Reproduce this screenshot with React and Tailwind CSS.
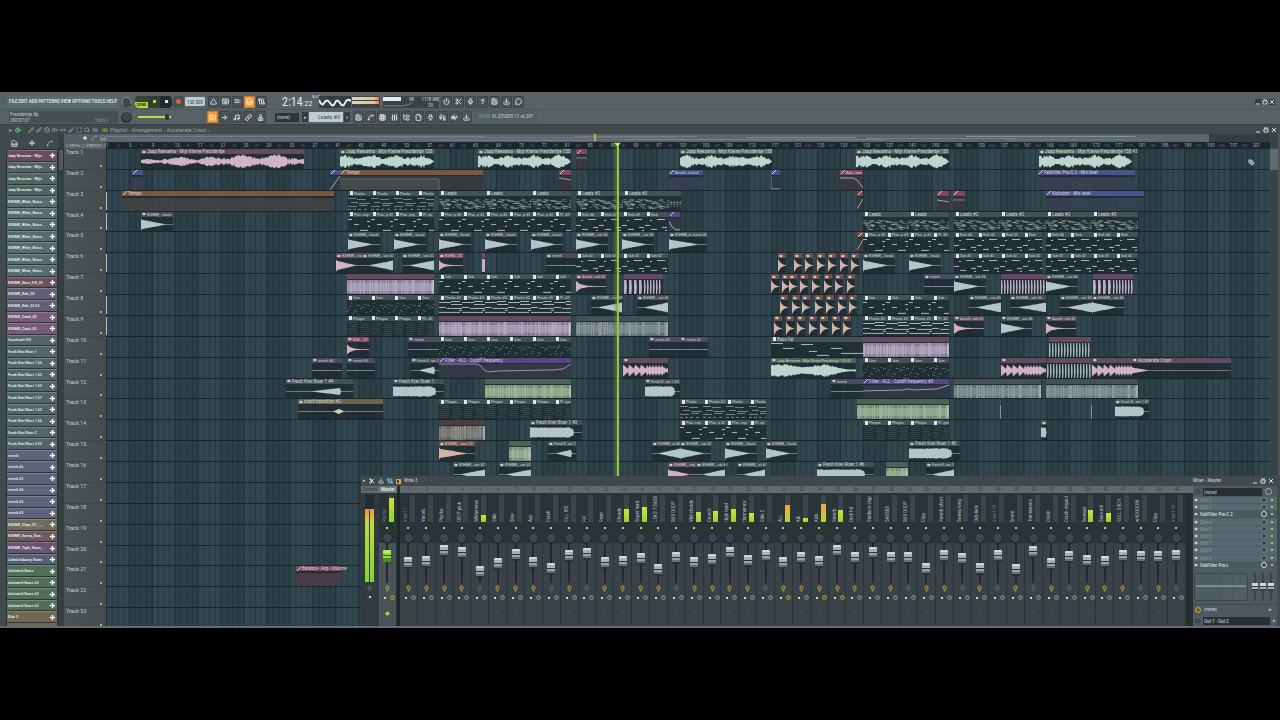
import React, { useState } from 'react';
import {
  ArrowRight, Ban, Brush, Cable, Download, File, FolderTree, Footprints, Grid3x3, Keyboard, Link,
  Magnet, Maximize, MessageCircle, Mic, MoveHorizontal, Music, Pencil, Piano, Plug, Plus, Power,
  Save, Scissors, Search, Slice, SlidersVertical, Spline, Stamp, Triangle, Volume2, VolumeX, Wind,
} from 'lucide-react';

// playlist canvas: x values of the clips run from ORIGIN to ORIGIN + SPAN
const ORIGIN = 106;
const SPAN = 1164;
const BARS = 203;
const TRACKS = 23;

const pct = (n) => `${(n / SPAN) * 100}%`;
const rnd = (n) => {
  const v = Math.sin(n * 12.9898 + 4.1) * 43758.5453;
  return v - Math.floor(v);
};

const HEADS = {
  gray: 'bg-[#465057]',
  pink: 'bg-[#634c61]',
  red: 'bg-[#84465f]',
  rust: 'bg-[#84483f]',
  green: 'bg-[#4b6455]',
  blue: 'bg-[#4b538c]',
  brown: 'bg-[#7b573f]',
  perc: 'bg-[#745147]',
  dark: 'bg-[#4a423f]',
  purple: 'bg-[#594583]',
  slate: 'bg-[#4b4c60]',
  tan: 'bg-[#68634a]',
};

const MINT = '#bcd5cd';
const ICE = '#b2c5ca';
const ROSE = '#d0b2c4';
const PEACH = '#d2b3a5';
const LILAC = '#bba9c6';

const JAAP = 'Jaap Reesema - Mijn Kleine Presidentje';

const clip = (t, x, end, kind, label, head = 'gray', color = ICE, pts) => ({
  t, x, w: end - x, kind, label, head, color, pts,
});

const seq = (t, start, end, kind, labels, step = 23) =>
  labels.map((label, i) =>
    clip(t, start + i * step, Math.min(start + (i + 1) * step, end), kind, label, 'gray', '#b4c2c4')
  );

const hits = (t, xs) => xs.map((x) => clip(t, x, x + 8, 'hit', '', 'perc', PEACH));

const rep = (s, n) => Array(n).fill(s);
const PLUC = 'Pluc..p #3';
const KICKS = ['Kick #4', 'Kick #2', 'Kick #3', 'Kick'];

const CLIPS = [
  clip(1, 141, 304, 'voxlow', JAAP, 'pink', ROSE),
  clip(1, 340, 434, 'vox', `${JAAP} 150`, 'green', MINT),
  clip(1, 478, 571, 'vox', `${JAAP} 150`, 'green', MINT),
  clip(1, 576, 587, 'auto', '', 'red', '#8d8d99', '0,4 11,4'),
  clip(1, 680, 772, 'vox', `${JAAP} 150`, 'green', MINT),
  clip(1, 856, 949, 'vox', `${JAAP} 150`, 'green', MINT),
  clip(1, 1039, 1132, 'vox', `${JAAP} 150 #3`, 'green', MINT),

  clip(2, 132, 143, 'auto', '', 'blue'),
  clip(2, 330, 340, 'auto', '', 'blue', '#b8c4c8', '0,15 10,1'),
  clip(2, 340, 483, 'auto', 'Tempo', 'brown', '#6c777a', '0,4 99,4 99,15'),
  clip(2, 559, 571, 'auto', '', 'red', '#a5a5ad', '0,3 12,5'),
  clip(2, 669, 703, 'auto', 'Reverb..ix level', 'blue'),
  clip(2, 771, 780, 'auto', '', 'blue', '#8f99a8', '0,1 0,14 9,14'),
  clip(2, 840, 863, 'auto', 'Bala..ume', 'red', '#b0b8bc', '0,3 13,3 17,5 20,9 23,13'),
  clip(2, 1038, 1135, 'auto', 'FabFilter Pro-Q 2 - Mix level', 'blue'),

  clip(3, 122, 334, 'auto', 'Tempo', 'brown'),
  ...seq(3, 348, 434, 'plucks', rep('Plucks', 4)),
  ...seq(3, 439, 571, 'leads', rep('Leads', 3), 46),
  ...seq(3, 576, 669, 'leads', rep('Leads #2', 2), 47),
  ...seq(3, 669, 681, 'leads', rep('', 4), 3),
  clip(3, 857, 863, 'auto', '', 'rust', '#b8b0b0', '0,13 6,3'),
  clip(3, 937, 949, 'auto', '', 'red', '#b8b0b0', '0,4 12,6'),
  clip(3, 953, 965, 'auto', '', 'red', '#8d8d99', '0,4 12,4'),
  clip(3, 1046, 1144, 'auto', 'Kickstart - Mix level', 'blue'),

  clip(4, 141, 173, 'decay', 'KSHMR_..haust'),
  ...seq(4, 348, 434, 'sub', ['Pluc..eep', 'Pluc..p #2', 'Pluc..eep', 'Pl..ep']),
  ...seq(4, 439, 571, 'sub', [...rep(PLUC, 5), 'Pl..#3']),
  ...seq(4, 576, 669, 'kick', KICKS),
  clip(4, 669, 680, 'auto', '', 'purple', '#b0b8bc', '0,4 3,10 7,13 11,13'),
  ...seq(4, 863, 949, 'leads', rep('Leads', 2), 46),
  ...seq(4, 954, 1138, 'leads', ['Leads #2', 'Leads #2', 'Leads #2', 'Leads #3'], 46),

  ...[348, 394, 439, 485, 531].map((x) => clip(5, x, x + 32, 'decay', 'KSHMR_..haust')),
  clip(5, 576, 608, 'decay', 'KSHMR_..ust #6'),
  clip(5, 622, 654, 'decay', 'KSHMR_..ust #6'),
  clip(5, 669, 707, 'decay', 'KSHMR_w..haust #6'),
  clip(5, 857, 863, 'auto', '', 'rust', '#b8b0b0', '0,13 6,3'),
  ...seq(5, 863, 949, 'sub', [PLUC, PLUC, PLUC, 'Pl..#3']),
  ...seq(5, 954, 1042, 'kick', KICKS),
  ...seq(5, 1046, 1138, 'kick', ['Kick #4', 'Kick', 'Kick #4', 'Kick']),

  clip(6, 336, 362, 'decay', 'KSHMR_..rog', 'pink', ROSE),
  clip(6, 362, 393, 'rise', 'KSHMR_..ust #2'),
  clip(6, 402, 434, 'rise', 'KSHMR_..ust #2'),
  clip(6, 439, 463, 'crash', 'KSHM.._02', 'red', ROSE),
  clip(6, 482, 485, 'solid', '', 'red', ROSE),
  clip(6, 546, 576, 'line', 'reverb', 'slate'),
  ...seq(6, 576, 669, 'kick', rep('Sub #2', 4)),
  ...hits(6, [778, 794, 805, 817, 828, 840, 851]),
  clip(6, 863, 895, 'decay', 'KSHMR_..haust'),
  clip(6, 909, 941, 'decay', 'KSHMR_..haust'),
  ...seq(6, 954, 1042, 'kick', rep('Sub #2', 4)),
  ...seq(6, 1046, 1138, 'kick', rep('Sub #2', 4)),

  clip(7, 347, 434, 'block', '', 'pink', LILAC),
  ...seq(7, 439, 571, 'sub', rep('Sub', 6)),
  clip(7, 576, 606, 'crash', 'Accele..ash #2', 'pink', ROSE),
  clip(7, 624, 663, 'stutter', '', 'pink', '#cbbcd2'),
  ...hits(7, [771, 782, 789, 800, 812, 824, 835, 847]),
  clip(7, 924, 954, 'line', 'reverb', 'slate'),
  clip(7, 954, 986, 'decay', 'KSHMR_..ust #6'),
  clip(7, 1001, 1046, 'stutter', '', 'pink', '#cbbcd2'),
  clip(7, 1046, 1078, 'decay', 'KSHMR_..ust #6'),
  clip(7, 1093, 1133, 'stutter', '', 'pink', '#cbbcd2'),

  ...seq(8, 347, 434, 'sine', rep('Sine', 4)),
  ...seq(8, 439, 571, 'chords', [...rep('Plucks #3', 5), 'Pl..#3']),
  clip(8, 591, 622, 'rise', 'KSHMR_..ust #5'),
  clip(8, 637, 668, 'rise', 'KSHMR_..ust #5'),
  ...hits(8, [780, 792, 802, 815, 826, 838, 849]),
  ...seq(8, 863, 949, 'sub', rep('Sub', 4)),
  clip(8, 969, 1001, 'rise', 'KSHMR_..ust #5'),
  clip(8, 1010, 1046, 'rise', 'KSHMR_..ust #5'),
  clip(8, 1060, 1092, 'rise', 'KSHMR_..ust #5'),
  clip(8, 1092, 1124, 'decay', 'KSHMR_..ust #6'),

  ...seq(9, 347, 434, 'plings', ['Plingss', 'Plingss', 'Plingss', 'Pli..#2']),
  clip(9, 439, 571, 'block', '', 'pink', LILAC),
  clip(9, 576, 668, 'block', '', 'gray', '#87949a'),
  ...hits(9, [774, 786, 797, 809, 820, 832, 843]),
  ...seq(9, 863, 949, 'chords', ['Plucks #3', 'Plucks #3', 'Plucks #3', 'Pl..#3']),
  clip(9, 954, 984, 'crash', 'Accele..ash #2', 'pink', ROSE),
  clip(9, 1001, 1032, 'decay', 'KSHMR_..ust #6'),
  clip(9, 1046, 1076, 'crash', 'Accele..ash #2', 'pink', ROSE),

  clip(10, 347, 369, 'crash', 'KSH.._03', 'red', ROSE),
  clip(10, 408, 439, 'line', 'reverb', 'slate'),
  ...seq(10, 439, 571, 'sine', rep('Sine', 6)),
  clip(10, 649, 680, 'line', 'reverb #3', 'slate'),
  clip(10, 680, 708, 'line', 'reverb #2', 'slate'),
  clip(10, 771, 863, 'bass', 'Bass fat', 'gray', '#b4c2c4'),
  clip(10, 863, 949, 'block', '', 'pink', LILAC),
  clip(10, 1049, 1091, 'stutter', '', 'pink', '#aebbbf'),

  clip(11, 312, 342, 'line', 'reverb #4', 'slate'),
  clip(11, 347, 375, 'line', 'reverb #5', 'slate'),
  clip(11, 411, 439, 'blip', 'Fresh K..ser 2'),
  clip(11, 439, 571, 'auto', 'Filter - ALL - Cutoff frequency', 'purple', '#a79cc0', '0,1 38,1 42,3 45,7 49,9 60,8 115,7 124,6 129,3 132,1'),
  clip(11, 623, 668, 'burst', '', 'pink', ROSE),
  clip(11, 771, 856, 'voxfall', `${JAAP} 150 #2`, 'green', MINT),
  ...seq(11, 863, 949, 'sine', rep('Sine', 4)),
  clip(11, 1001, 1046, 'burst', '', 'pink', ROSE),
  clip(11, 1047, 1091, 'stutter', '', 'pink', '#aebbbf'),
  clip(11, 1092, 1137, 'burst', '', 'pink', ROSE),
  clip(11, 1132, 1231, 'tail', 'Accelerate Crash', 'pink', ROSE),

  clip(12, 286, 353, 'riser', 'Fresh Kiwi Riser 1 #4'),
  clip(12, 393, 444, 'blob', 'Fresh Kiwi Riser 1'),
  clip(12, 485, 571, 'block', '', 'green', '#9fbb96'),
  clip(12, 645, 680, 'blob', 'Fresh Ki..ser 1 #3'),
  clip(12, 831, 863, 'line', 'reverb', 'slate'),
  clip(12, 863, 949, 'auto', 'Filter - ALL - Cutoff frequency #3', 'purple', '#a9a5bd', '0,7 40,6 46,5 50,6 74,5 80,3 86,1'),
  clip(12, 954, 1041, 'block', '', 'gray', '#87949a'),
  clip(12, 1046, 1138, 'block', '', 'gray', '#87949a'),

  clip(13, 298, 383, 'bump', 'crash transition #2', 'tan', '#cfcdb5'),
  ...seq(13, 439, 571, 'plings', [...rep('Plingss', 5), 'Pl..gss']),
  ...seq(13, 680, 766, 'plucks', ['Plucks', 'Plucks #2', 'Plucks', 'Plucks']),
  clip(13, 857, 949, 'block', '', 'green', '#9fbb96'),
  clip(13, 1000, 1001, 'sliver', ''),
  clip(13, 1091, 1092, 'sliver', ''),
  clip(13, 1115, 1149, 'blob', 'Fresh Ki..ser 1 #7'),

  clip(14, 439, 485, 'block', '', 'dark', '#85847e'),
  clip(14, 530, 582, 'blob', 'Fresh Kiwi Riser 1 #2'),
  ...seq(14, 680, 766, 'sub', ['Pluc..eep', 'Pluc..p #2', 'Pluc..eep', 'Pl..ep']),
  ...seq(14, 863, 949, 'plings', ['Plingss', 'Plingss', 'Plingss', 'Pl..gss']),
  clip(14, 1041, 1047, 'blob', ''),

  clip(15, 439, 475, 'decay', 'KSHMR_..own_02', 'perc', PEACH),
  clip(15, 509, 531, 'block', '', 'green', '#9fbb96'),
  clip(15, 548, 576, 'blip', 'Fresh K..ser 2'),
  clip(15, 652, 680, 'rise', 'KSHMR..st #6'),
  clip(15, 680, 711, 'decay', 'KSHMR_..ust #2'),
  clip(15, 725, 757, 'decay', 'KSHMR_..haust'),
  clip(15, 766, 797, 'decay', 'KSHMR_..haust'),
  clip(15, 909, 960, 'blob', 'Fresh Kiwi Riser 1 #2'),

  clip(16, 453, 485, 'rise', 'KSHMR_..ust #2'),
  clip(16, 499, 531, 'rise', 'KSHMR_..ust #2'),
  clip(16, 668, 696, 'decay', 'KSHMR_..rog', 'pink', ROSE),
  clip(16, 696, 725, 'rise', 'KSHMR_..ust #2'),
  clip(16, 737, 765, 'rise', 'KSHMR_..st #2'),
  clip(16, 817, 874, 'blob', 'Fresh Kiwi Riser 1 #6'),
  clip(16, 886, 908, 'block', '', 'green', '#9fbb96'),
  clip(16, 926, 954, 'rise', 'Fresh K..ser 2'),

  clip(21, 296, 341, 'auto', 'Balance - Arp - Volume', 'red'),
];

const ENVELOPES = {
  vox: (p, r, x) => (p > 0.93 ? (1 - p) * 9 : 0.66 + 0.2 * Math.sin(x / 4)) * (0.55 + 0.7 * r),
  voxlow: (p, r, x) => {
    const base = p < 0.13 ? 0.25 : p < 0.5 ? 0.55 : 0.85;
    return (p > 0.96 ? 0.3 : base) * (0.5 + 0.35 * Math.sin(x / 5) + 0.5 * r);
  },
  voxfall: (p, r, x) => (p < 0.2 ? 0.95 : 0.75 - 0.6 * Math.max(0, p - 0.6) * 2 + 0.25 * Math.sin(x / 7)) * (0.65 + 0.35 * r),
  decay: (p, r) => (p < 0.02 ? 0.95 : Math.max(0, 0.75 - p) * (0.85 + 0.15 * r)),
  rise: (p, r) => Math.max(0, p - 0.25) * (0.85 + 0.15 * r),
  crash: (p, r) => Math.max(0, 0.9 * Math.exp(-p * 6)) * (0.8 + 0.2 * r),
  hit: (p) => 1.1 * Math.exp(-p * 2.8) - 0.06,
  line: () => 0,
  bump: (p) => Math.max(0, 0.35 - Math.abs(p - 0.48) * 6),
  blip: (p) => (p > 0.85 ? 0 : Math.max(0, p - 0.3)),
  riser: (p) => (p > 0.82 ? 0 : Math.max(0, p - 0.4) * 1.2),
  blob: (p, r) => (p > 0.84 ? 0 : p > 0.78 ? 0.5 : 0.62 + 0.15 * r),
  tail: (p) => Math.max(0, 0.4 - p * 2.5),
  burst: (p, r, x) => (x < 24 ? 0.95 - (x % 6) / 7 : 0.5 + (x % 3 === 0 ? 0.4 : 0)) * (p > 0.93 ? 0.4 : 0.9),
};

const NOTES = {
  sub: [[0, 2, 4], [6, 7, 5], [12, 13, 8], [19, 4, 3], [20, 9, 2]],
  kick: [[0, 8, 5], [5, 3, 2], [6, 12, 6], [12, 2, 8], [17, 10, 5], [20, 13, 2]],
  chords: [[0, 2, 12], [12, 4, 11], [0, 7, 7], [8, 8, 15], [0, 12, 21], [20, 10, 3], [12, 1, 9]],
  plucks: [[0, 2, 8], [9, 3, 9], [3, 6, 7], [11, 7, 11], [0, 10, 9], [11, 9, 8], [0, 13, 3], [5, 13, 3], [10, 13, 3], [16, 13, 3]],
  bass: [[0, 1, 12], [12, 6, 11], [30, 2, 12], [38, 9, 8], [46, 13, 12], [60, 6, 11], [70, 11, 23]],
};

function Waveform({ kind, w, color }) {
  const env = ENVELOPES[kind];
  const top = [];
  const bottom = [];
  const step = w > 12 ? 1 : 0.5;
  for (let x = 0; x <= w; x += step) {
    const a = Math.min(1, env(x / w, rnd(x * 1.7 + w), x)) * 6.6 + 0.3;
    top.push(`${x},${(7.5 - a).toFixed(2)}`);
    bottom.unshift(`${x},${(7.5 + a).toFixed(2)}`);
  }
  return <polygon points={[...top, ...bottom].join(' ')} fill={color} />;
}

function Block({ w, color }) {
  const cols = Array.from({ length: Math.round(w) }, (_, x) => x);
  return (
    <>
      <rect x="0" y="1" width={w} height="14" fill={color} opacity="0.7" />
      {cols.map((x) => (
        <rect key={x} x={x} y={rnd(x) > 0.5 ? 1 : 2} width="1" height="13" fill={rnd(x + w) > 0.4 ? '#dfe6e6' : '#4c565c'} opacity={rnd(x * 3) * 0.4} />
      ))}
      <rect x="0" y="4" width={w} height="8" fill={color} opacity="0.6" />
      <rect x={w - 2} y="1" width="2" height="14" fill="#dfe6e6" opacity="0.4" />
    </>
  );
}

function Notes({ kind, w, color }) {
  if (kind === 'sine') {
    return Array.from({ length: 16 }, (_, i) => (
      <rect key={i} x={(i * 1.45) % w} y={2 + Math.floor(rnd(i + 3) * 12)} width="1" height="1" fill={color} opacity="0.6" />
    ));
  }
  if (kind === 'plings') {
    return Array.from({ length: 14 }, (_, i) => (
      <rect key={i} x={(i % 2) * w * 0.5 + rnd(i) * 3} y={1 + i} width={w * 0.4} height="0.6" fill={color} opacity="0.28" />
    ));
  }
  if (kind === 'leads') {
    return Array.from({ length: Math.round(w) * 2 }, (_, i) => (
      <rect key={i} x={rnd(i * 2.3) * w} y={3 + Math.floor(rnd(i + 9) * 10)} width={Math.min(w, 2 + rnd(i) * 3)} height="0.7" fill={color} opacity="0.55" />
    ));
  }
  return NOTES[kind]
    .filter(([x]) => x < w)
    .map(([x, y, len]) => (
      <rect key={`${x}-${y}`} x={x} y={y} width={Math.min(len, w - x)} height="1" fill={color} opacity={kind === 'plucks' ? 0.6 : 0.95} />
    ));
}

function Stutter({ w, color }) {
  const bars = [];
  for (let x = 0, i = 0; x < w - 1; i += 1) {
    const size = x < 18 && w < 42 ? 4 : 2;
    bars.push(<path key={x} d={`M${x} 1h${size * 0.6}q1 6.500 0 14h-${size * 0.6}z`} fill={color} opacity="0.9" />);
    x += size + 1;
  }
  return bars;
}

function Automation({ w, color, pts, head }) {
  const tint = head === 'red' ? '#54404f' : head === 'purple' ? '#46445a' : head === 'blue' ? '#3d4658' : '#4a4a48';
  return (
    <>
      <rect x="0" y={pts ? 1 : 2} width={w} height="14" fill={tint} opacity={pts ? 0.45 : 0.75} />
      {head === 'brown' && pts && <rect x="0" y="4" width="99" height="11" fill="#4c504e" opacity="0.7" />}
      {pts && <polyline points={pts} fill="none" stroke={color} strokeWidth="0.9" />}
    </>
  );
}

function ClipBody(props) {
  const { kind, w, color } = props;
  if (kind === 'auto') return <Automation {...props} />;
  if (kind === 'block') return <Block {...props} />;
  if (kind === 'stutter') return <Stutter {...props} />;
  if (kind === 'solid') return <rect x="0" y="1" width={w} height="13" fill={color} />;
  if (kind === 'sliver') return <rect x="0" y="1" width={w} height="14" fill={color} opacity="0.7" />;
  if (ENVELOPES[kind]) return <Waveform {...props} />;
  return <Notes {...props} />;
}

const MIDI = ['sub', 'kick', 'chords', 'plucks', 'bass', 'sine', 'plings', 'leads'];

function Clip({ c }) {
  const { x, w, kind, label, head } = c;
  return (
    <div className="absolute inset-y-0 flex flex-col" style={{ left: pct(x - ORIGIN), width: pct(w) }}>
      <div className={`flex h-[5px] shrink-0 items-center gap-px pl-px leading-[5px] whitespace-nowrap text-[#cdd6d8] ${w < 40 || kind === 'voxfall' ? 'text-[4px]' : 'text-[5px]'} ${HEADS[head]}`}>
        {w > 5 && kind !== 'block' && kind !== 'stutter' && (
          <svg viewBox="0 0 4 4" className="h-[4px] w-[4px] shrink-0">
            {kind === 'auto' ? (
              <path d="M0 4L4 0M3 0h1v1" stroke="#e2e8ea" strokeWidth="0.9" fill="none" />
            ) : MIDI.includes(kind) ? (
              <path d="M1 0h3v4H1z" fill="#e2e8ea" />
            ) : (
              <path d="M0 1.500h1.500V0.500L4 2 1.500 3.500V2.500H0z" fill="#e2e8ea" />
            )}
          </svg>
        )}
        {w > 12 && label && <span>{label}</span>}
      </div>
      <svg viewBox={`0 0 ${w} 15`} preserveAspectRatio="none" className="min-h-0 w-full flex-1 bg-[#1d282e]/70">
        <ClipBody {...c} />
      </svg>
    </div>
  );
}

const PICKER = [
  ['Jaap Reesema - Mijn..', 'bg-[#6c4b5c]'],
  ...rep(['Jaap Reesema - Mijn..', 'bg-[#506460]'], 3),
  ...rep(['KSHMR_White_Noise..', 'bg-[#586a72]'], 7),
  ['KSHMR_Short_Fill_20', 'bg-[#6d505b]'],
  ['KSHMR_Ride_03', 'bg-[#625f77]'],
  ['KSHMR_Ride_03 #2', 'bg-[#625f77]'],
  ['KSHMR_Crash_02', 'bg-[#765a76]'],
  ['KSHMR_Crash_03', 'bg-[#765a76]'],
  ['Accelerate Fill', 'bg-[#54646b]'],
  ...['1', '1 #4', '1 #2', '1 #3', '1 #7', '1 #5', '1 #6', '2', '2 #2'].map((n) => [`Fresh Kiwi Riser ${n}`, 'bg-[#54646b]']),
  ...['', ' #6', ' #3', ' #4', ' #2', ' #5'].map((n) => [`reverb${n}`, 'bg-[#5c637a]']),
  ['KSHMR_Claps_07_-_..', 'bg-[#6f6b5c]'],
  ['KSHMR_Sweep_Dow..', 'bg-[#70595a]'],
  ['KSHMR_Tight_Snare_..', 'bg-[#6a5570]'],
  ['Lethal Industry Snare', 'bg-[#566078]'],
  ...['', ' #4', ' #3', ' #2'].map((n) => [`Activated Snare${n}`, 'bg-[#526e59]']),
  ['Kick 5', 'bg-[#6f6854]'],
];

// [name, fader centre from the top of its slot, meter height, lit]
const INSERTS = [
  ['Insert 1', 14, 0, 1], ['Vocals', 13, 0, 1], ['Plucks', 2, 0, 1], ['DEEP pluk', 4, 0, 1], ['Whitenoise', 23, 7, 0],
  ['Ride', 15, 0, 1], ['Sine', 6, 0, 1], ['Arp', 14, 0, 1], ['Crash', 20, 0, 0], ['FILL BIG', 7, 0, 1], ['Fill', 5, 0, 0],
  ['Riser', 14, 0, 1], ['Chords', 13, 13, 1], ['Super lead', 10, 15, 1], ['LEAD 7 BASS', 21, 0, 1], ['SUB DROP', 9, 0, 0],
  ['Mid chords', 14, 10, 1], ['Crunch', 11, 11, 1], ['High lead', 4, 13, 1], ['Harmonics', 12, 9, 1], ['Ride 2', 7, 0, 0],
  ['ALL', 14, 17, 1], ['Kik', 9, 4, 1], ['Kick', 13, 18, 1], ['Reverb', 2, 12, 1], ['Orch hit', 9, 0, 1],
  ['Stadium clap', 4, 0, 1], ['BASSSS', 9, 0, 1], ['SUB DROP', 9, 0, 0], ['Clap', 20, 0, 1], ['Reverb short', 7, 0, 1],
  ['Sweep long', 10, 0, 0], ['Dub kick', 20, 0, 1], ['Insert 34', 7, 0, 0], ['Snare', 21, 0, 1], ['Transisions', 3, 0, 0],
  ['Crash', 15, 0, 1], ['Crash impact', 8, 0, 0], ['Sweeps', 12, 12, 1], ['Bass roll', 13, 9, 1], ['ROLL DRCH', 7, 0, 1],
  ['wHOOOOM', 8, 0, 0], ['Clap', 8, 0, 1], ['Insert 44', 7, 0, 0],
];

const SLOTS = ['Slot 1', 'Slot 2', 'FabFilter Pro-C 2', 'Slot 4', 'Slot 5', 'Slot 6', 'Slot 7', 'Slot 8', 'Slot 9', 'FabFilter Pro-L'];

const FADER =
  'h-[40px] w-[8px] shrink-0 appearance-none [writing-mode:vertical-lr] [direction:rtl] bg-[linear-gradient(90deg,transparent_3px,#20292e_3px,#20292e_5px,transparent_5px)] [&::-webkit-slider-thumb]:appearance-none [&::-webkit-slider-thumb]:h-[12px] [&::-webkit-slider-thumb]:w-[8px] [&::-webkit-slider-thumb]:rounded-[1px]';
const GRAY_THUMB =
  '[&::-webkit-slider-thumb]:bg-[linear-gradient(#d3d8db_0_2px,#a9b0b5_2px_5px,#2b3237_5px_6px,#9ba2a7_6px_8px,#666e74_8px_10px,#2b3237_10px)]';
const GREEN_THUMB =
  '[&::-webkit-slider-thumb]:bg-[linear-gradient(#b8f05a_0_3px,#8fdc35_3px_5px,#2f5a18_5px_6px,#8fdc35_6px_8px,#4f8a22_8px)]';

function Tool({ icon: Icon, label, active, children }) {
  return (
    <button
      aria-label={label}
      className={`flex h-[12px] w-[11px] items-center justify-center rounded-[1px] border text-[8px] font-bold leading-none ${
        active ? 'border-[#c97a24] bg-[#f39a3a] text-[#ffe6b8]' : 'border-[#3d4548] bg-[#4a5255] text-[#dfe5e6]'
      }`}
    >
      {Icon ? <Icon className="h-[7px] w-[7px]" strokeWidth={3} /> : children}
    </button>
  );
}

function Knob({ big }) {
  return (
    <svg viewBox="0 0 12 12" className={big ? 'h-[12px] w-[11px] shrink-0' : 'h-[11px] w-[11px] shrink-0'}>
      <circle cx="6" cy="6" r="5.800" fill={big ? '#3c4447' : '#222b30'} />
      <circle cx="6" cy="5.500" r="4.600" fill="#3c474e" />
      {big && <path d="M2.500 9.500A5 5 0 1 1 10.500 8" fill="none" stroke="#a9b2b4" strokeWidth="0.8" />}
    </svg>
  );
}

function WindowButtons({ boxed }) {
  return (
    <div className={`flex items-center ${boxed ? 'gap-px' : 'gap-[2px]'}`}>
      {['M1 5h4', 'M1 2h4v3H1zM1 1h4', 'M1 1l4 4M5 1L1 5'].map((d, i) => (
        <button key={d} aria-label={['Minimize', 'Maximize', 'Close'][i]} className={`h-[6px] w-[6px] rounded-[1px] ${boxed ? 'bg-[#333b3e]' : ''}`}>
          <svg viewBox="0 0 6 6" className="h-full w-full">
            <path d={d} stroke="#d5dcdd" strokeWidth="1" fill="none" />
          </svg>
        </button>
      ))}
    </div>
  );
}

function Toolbar() {
  const [tempo, setTempo] = useState('150.000');
  return (
    <header className="border-b border-[#363e40] bg-[#586265] pt-[2px]">
      <div className="flex h-4 items-center border-b border-[#4d575a]">
        <nav className="ml-[7px] flex h-[12px] w-[112px] items-center justify-between bg-[#586b69] px-[2px] text-[5px] font-bold text-[#d6dfdf]">
          {['FILE', 'EDIT', 'ADD', 'PATTERNS', 'VIEW', 'OPTIONS', 'TOOLS', 'HELP'].map((m) => (
            <button key={m}>{m}</button>
          ))}
        </nav>
        <div className="ml-[2px]"><Knob big /></div>
        <div className="ml-[3px] flex h-[12px] w-[37px] items-center overflow-hidden rounded-[4px] bg-[#22292b]">
          <button className="flex h-full w-[13px] flex-col justify-end bg-[#39432f]">
            <span className="w-full bg-[#a4dc3c] text-center text-[4px] leading-[6px] font-bold text-[#2b3a10]">SONG</span>
          </button>
          <button aria-label="Play" className="flex h-full flex-1 items-center justify-center bg-[#343d30]">
            <span className="h-[3px] w-[3px] bg-[#b9d94a]" />
          </button>
          <button aria-label="Stop" className="flex h-full flex-1 items-center justify-center">
            <span className="h-[3px] w-[3px] bg-[#e0e5e5]" />
          </button>
        </div>
        <button aria-label="Record" className="ml-px flex h-[12px] w-[11px] items-center justify-center rounded-[3px] bg-[#474f51]">
          <span className="h-[5px] w-[5px] rounded-full bg-[#d8604a]" />
        </button>
        <input
          aria-label="Tempo"
          value={tempo}
          onChange={(e) => setTempo(e.target.value)}
          className="ml-px h-[9px] w-[20px] rounded-[1px] bg-[#bccdd2] text-center text-[5px] leading-none text-[#3c4a50]"
        />
        <div className="ml-[3px] flex gap-px">
          <Tool icon={Triangle} label="Metronome" />
          <Tool icon={Keyboard} label="Wait for input" />
          <Tool label="Count in"><span className="text-[5px]">32:</span></Tool>
          <Tool icon={Piano} label="Overdub" active />
          <Tool icon={Cable} label="Loop record" />
        </div>
        <div className="ml-[15px] flex w-[37px] items-baseline text-[12px] leading-none text-[#e3e9ea]">
          2:14<span className="text-[8px]">:22</span>
          <span className="self-start text-[3px] leading-none">M:S:CS</span>
        </div>
        <svg viewBox="0 0 32 12" className="h-[12px] w-[32px] bg-[#343d40]">
          <path d="M0 4q3 7 5 3q3-5 6 0t5 0 5 0 5 0 6-2" fill="none" stroke="#eef2f2" strokeWidth="2" />
        </svg>
        <div className="ml-px flex h-[12px] w-[28px] flex-col gap-px bg-[#3b4346] pt-px">
          <div className="h-[3px] w-[27px] bg-linear-to-r from-[#d9d6c4] via-[#e0c49f] via-80% to-[#e8793f]" />
          <div className="h-[3px] w-[27px] bg-linear-to-r from-[#d9d6c4] via-[#e0c49f] via-80% to-[#e8793f]" />
        </div>
        <div className="ml-[3px] grid h-[12px] w-[56px] grid-cols-[34px_22px] bg-[#3a4245] text-[5px] leading-[6px] text-[#cfd7d8]">
          <div className="flex flex-col">
            <div className="flex h-[6px] items-center justify-between pr-[3px]"><span className="h-[4px] w-[18px] bg-[#e8eded]" />98</div>
            <svg viewBox="0 0 34 6" className="h-[6px] w-[32px]">
              <path d="M1 4h16q10 0 14-4" fill="none" stroke="#88a39c" strokeWidth="0.8" />
            </svg>
          </div>
          <div className="text-right"><div>1118 MB</div><div className="pr-[6px]">29</div></div>
        </div>
        <div className="ml-[2px] flex gap-px">
          <Tool icon={Power} label="Power" />
          <Tool icon={Scissors} label="Cut" />
          <Tool icon={Mic} label="Record audio" />
          <Tool label="Help">?</Tool>
          <Tool icon={Save} label="Save" />
          <Tool icon={Download} label="Render" />
          <Tool icon={MessageCircle} label="Messages" />
        </div>
        <div className="ml-auto mr-[5px]"><WindowButtons boxed /></div>
      </div>
      <div className="flex h-[14px] items-center">
        <div className="ml-[9px] h-[12px] w-[109px] bg-[#465053] px-px text-[5px] leading-[6px] text-[#c3cccd]">
          <div>Presidentje.flp</div>
          <div className="flex justify-between"><span>200:07:07</span><span className="pr-2 text-[#8b9597]">Track 1</span></div>
        </div>
        <div className="ml-[3px]"><Knob /></div>
        <input
          type="range"
          aria-label="Main volume"
          defaultValue="92"
          className="ml-[6px] h-[8px] w-[33px] appearance-none bg-[linear-gradient(transparent_3px,#b6dc4a_3px,#b6dc4a_5px,transparent_5px)] [&::-webkit-slider-thumb]:h-[6px] [&::-webkit-slider-thumb]:w-[4px] [&::-webkit-slider-thumb]:appearance-none [&::-webkit-slider-thumb]:rounded-full [&::-webkit-slider-thumb]:bg-[#2a3235]"
        />
        <div className="ml-[36px] flex gap-px">
          <Tool icon={Keyboard} label="Typing keyboard" active />
          <Tool icon={ArrowRight} label="Step" />
          <Tool icon={Music} label="Slide" />
          <Tool icon={Link} label="Multilink" />
          <Tool icon={Stamp} label="Stamp" />
        </div>
        <select aria-label="Snap" className="ml-[9px] h-[9px] w-[24px] appearance-none bg-[#2d3538] pl-[2px] text-[5px] leading-[9px] text-[#c6cfd0]">
          <option>(none)</option>
        </select>
        <button aria-label="Previous pattern" className="ml-[3px] h-[10px] w-[6px] bg-[#343c3f] text-[5px] leading-none text-[#cdd5d6]">▸</button>
        <select aria-label="Pattern" className="ml-px h-[10px] w-[34px] appearance-none bg-[#bccdd2] pl-[9px] text-[6px] leading-[10px] text-[#3a484e]">
          <option>Leads #3</option>
        </select>
        <button aria-label="Next pattern" className="ml-px h-[10px] w-[6px] bg-[#343c3f] text-[5px] leading-none text-[#cdd5d6]">+</button>
        <div className="ml-[3px] flex gap-px">
          <Tool icon={Save} label="Playlist" />
          <Tool icon={Spline} label="Piano roll" />
          <Tool icon={Grid3x3} label="Channel rack" />
          <Tool icon={SlidersVertical} label="Mixer" />
          <Tool icon={FolderTree} label="Browser" />
          <Tool icon={File} label="Project" />
          <Tool icon={Plug} label="Plugins" />
          <Tool icon={Footprints} label="Tempo tapper" />
          <Tool icon={Wind} label="Touch" />
          <Tool icon={Download} label="Updates" />
        </div>
        <div className="ml-px flex h-[12px] w-[64px] items-center gap-[2px] bg-[#526160] pl-[6px] text-[5px] text-[#c9d6d3]">
          <span className="text-[#7f9a90]">05-05</span>FL STUDIO 11 vs 20?
        </div>
      </div>
    </header>
  );
}

function PlaylistHeader() {
  return (
    <div className="flex h-[9px] items-center bg-[#40494b] pl-[9px] text-[6px] leading-[9px] text-[#98a3a5]">
      <span className="w-[6px]">▸</span>
      <Magnet className="h-[6px] w-[6px] rotate-180 text-[#4fc98a]" strokeWidth={4} />
      <div className="ml-[7px] flex gap-[2px]">
        <Pencil className="h-[6px] w-[6px] text-[#d59a3c]" strokeWidth={3} />
        {[Brush, Ban, VolumeX, MoveHorizontal, Slice, Maximize, Search, Volume2].map((Icon, i) => (
          <Icon key={i} className="h-[6px] w-[6px]" strokeWidth={3} />
        ))}
      </div>
      <Volume2 className="ml-[4px] h-[6px] w-[6px] text-[#7fc241]" strokeWidth={3} />
      <span className="ml-[2px]">Playlist - Arrangement › Accelerate Crash ›</span>
      <div className="ml-auto mr-[3px]"><WindowButtons /></div>
    </div>
  );
}

function Picker() {
  return (
    <aside className="flex w-[52px] shrink-0 flex-col bg-[#2c3437]">
      <div className="flex h-[15px] items-center justify-around bg-[#40494b] pt-[3px] text-[#c3cccd]">
        <Piano className="h-[7px] w-[7px]" strokeWidth={3} />
        <Plus className="h-[8px] w-[8px]" strokeWidth={4} />
        <Spline className="h-[7px] w-[7px]" strokeWidth={2} />
      </div>
      <ul className="grid h-[473px] auto-rows-fr px-px">
        {PICKER.map(([name, color], i) => (
          <li key={i} className={`mt-px flex items-center justify-between border-t border-white/20 px-px text-[4px] font-bold whitespace-nowrap text-[#dbe2e3] ${color}`}>
            <span>{name}</span>
            <Plus className="h-[7px] w-[7px] shrink-0 text-white" strokeWidth={5} />
          </li>
        ))}
      </ul>
      <div className="mx-px mt-px flex-1 bg-[#6f6854]" />
    </aside>
  );
}

function TrackHeads() {
  return (
    <div className="flex w-[42px] shrink-0 flex-col bg-[#485153]">
      <div className="flex h-[15px] flex-col justify-between bg-[#566064] text-[#c3cccd]">
        <div className="flex justify-end gap-[3px] pt-px">
          <Plus className="h-[6px] w-[6px] text-white" strokeWidth={4} />
          <Spline className="h-[6px] w-[6px] text-[#8b9597]" strokeWidth={3} />
          <Piano className="h-[6px] w-[6px] text-[#8b9597]" strokeWidth={3} />
        </div>
        <div className="flex justify-end gap-px text-[4px] leading-[6px]">
          <span>Z CROSS</span><span>▢</span><span>STRETCH</span><span>▢</span>
        </div>
      </div>
      <div className="min-h-0 flex-1 overflow-hidden">
        <ol className="grid h-[480px] grid-rows-[repeat(23,minmax(0,1fr))]">
          {Array.from({ length: TRACKS }, (_, i) => (
            <li key={i} className="flex justify-between border-b border-[#3d4649] bg-linear-to-r from-[#4a5456] to-[#434c4e] pl-[2px] text-[6px] leading-[6px] text-[#c3cbcc]">
              <span>Track {i + 1}</span>
              <span className="mr-[4px] mb-[2px] h-[2px] w-[2px] self-end bg-[#a2c93c]" />
            </li>
          ))}
        </ol>
      </div>
    </div>
  );
}

function Overview() {
  const lines = [
    [0, 2, 380, '#7b86a8'], [20, 5, 600, '#68739a'], [240, 3, 330, '#86727f'], [330, 6, 160, '#7d6f86'], [470, 2, 120, '#9a7f74'],
    [520, 5, 260, '#7f9288'], [640, 3, 110, '#8f94a5'], [760, 4, 150, '#a3737f'], [860, 2, 170, '#8fa3a5'], [900, 5, 150, '#6b8087'],
  ];
  return (
    <svg viewBox="0 0 1164 8" preserveAspectRatio="none" className="h-[8px] w-full shrink-0 bg-[#343d42]">
      <rect x="0" y="0" width="1103" height="8" fill="#5b676e" />
      {lines.map(([x, y, w, fill]) => (
        <rect key={x} x={x} y={y} width={w} height="1" fill={fill} opacity="0.7" />
      ))}
      <rect x="488" y="0" width="2" height="7" fill="#a8b84a" />
    </svg>
  );
}

function Ruler() {
  const marks = Array.from({ length: 101 }, (_, i) => i * 2 + 1);
  return (
    <div className="flex h-[7px] shrink-0 bg-[#1b272d] pr-[5px] text-[5px] leading-[7px] text-[#9fadb2]">
      {marks.map((n) => (
        <span key={n} className={`min-w-0 flex-1 basis-0 overflow-visible whitespace-nowrap ${n % 4 === 1 ? '' : 'text-[4px] text-[#5f6d74]'}`}>{n}</span>
      ))}
    </div>
  );
}

function BarLines() {
  return (
    <svg viewBox={`0 0 ${SPAN} 10`} preserveAspectRatio="none" className="absolute inset-0 h-full w-full">
      {Array.from({ length: BARS }, (_, i) => {
        const x = (i * SPAN) / BARS;
        return (
          <g key={i}>
            {Math.floor(i / 4) % 2 === 1 && <rect x={x} y="0" width="6" height="10" fill="#293b42" opacity="0.6" />}
            <rect x={x} y="0" width="1" height="10" fill="#1d2e35" opacity={i % 4 === 0 ? 0.9 : 0.5} />
          </g>
        );
      })}
    </svg>
  );
}

function Playlist() {
  const live = [3, 4, 6, 8, 9];
  return (
    <main className="relative flex min-w-0 flex-1 flex-col">
      <Overview />
      <Ruler />
      <div className="relative min-h-0 flex-1 overflow-hidden bg-[#31464e]">
        <BarLines />
        <div className="relative grid h-[480px] grid-rows-[repeat(23,minmax(0,1fr))]">
          {Array.from({ length: TRACKS }, (_, i) => (
            <section key={i} className="relative border-b border-[#17252b]">
              {live.includes(i + 1) && <span className="absolute inset-y-px left-0 w-px bg-[#b4c2c6]" />}
              {CLIPS.filter((c) => c.t === i + 1).map((c, j) => <Clip key={j} c={c} />)}
            </section>
          ))}
        </div>
        <svg viewBox="0 0 8 8" className="absolute top-[10px] right-[15px] h-[7px] w-[7px]">
          <path d="M1 1l3 0 3 4-2 2-4-3z" fill="#8d999d" stroke="#dde4e6" strokeWidth="0.8" />
        </svg>
      </div>
      <div className="absolute top-[8px] bottom-0 w-[5px] -translate-x-[4px] overflow-visible" style={{ left: pct(512) }}>
        <svg viewBox="0 0 8 6" className="absolute h-[5px] w-[7px]">
          <path d="M0 1h8L4 6z" fill="#c7ee4a" />
        </svg>
        <div className="absolute inset-x-0 top-[4px] bottom-0 bg-[linear-gradient(90deg,rgba(90,150,42,0.1),rgba(100,150,42,0.6)_3px,#94c43c_3px)]" />
      </div>
    </main>
  );
}

function Bulb({ lit }) {
  return (
    <svg viewBox="0 0 6 8" className="h-[7px] w-[5px] shrink-0">
      <circle cx="3" cy="3" r="1.900" fill="none" stroke={lit ? '#e0a92f' : '#626d72'} strokeWidth="1.200" />
      <path d="M2 6h2v1.500H2z" fill={lit ? '#e0a92f' : '#626d72'} />
    </svg>
  );
}

function Strip({ name, pos, level, lit, hot, clock, master }) {
  const dim = name.startsWith('Insert') || master;
  return (
    <div className={`flex min-w-0 flex-1 flex-col items-center border-r border-[#2b3438] ${master ? 'bg-[#475357]' : 'bg-[#384247]'}`}>
      <div className="flex h-[30px] w-full shrink-0 items-end justify-between bg-[#2a3338] px-[2px] pb-px">
        <span className={`h-[29px] w-[7px] rotate-180 text-[5px] leading-[7px] whitespace-nowrap [writing-mode:vertical-rl] ${dim ? 'text-[#667177]' : 'text-[#b5bfc2]'}`}>{name}</span>
        <div className="flex h-[27px] w-[5px] flex-col justify-end bg-[#3b464c]">
          <div className={`w-full ${hot ? 'bg-linear-to-b from-[#f0a04a] to-[#a8dc30]' : 'bg-linear-to-b from-[#cfe23c] to-[#8fd62e]'}`} style={{ height: level }} />
        </div>
      </div>
      <div className="flex h-[20px] w-full shrink-0 flex-col items-center bg-[#2a3338] pt-[4px]">
        <span className="h-[2px] w-[2px] shrink-0 bg-[#a4e24a]" />
        <div className="mt-[4px]"><Knob /></div>
      </div>
      <input type="range" aria-label={`${name} level`} defaultValue={Math.round(((28 - pos) / 28) * 100)} className={`${FADER} ${master ? GREEN_THUMB : GRAY_THUMB}`} />
      <div className="mt-[2px]"><Bulb lit={lit} /></div>
      <div className="flex h-[11px] shrink-0 items-center gap-[4px] pl-[4px]">
        <span className="h-[2px] w-[2px] bg-[#ccd4d6]" />
        <svg viewBox="0 0 6 6" className="h-[5px] w-[5px]">
          <circle cx="3" cy="3" r="2.300" fill="none" stroke={clock ? '#e0a92f' : '#9aa5a9'} strokeWidth="1" />
          <path d="M3 1.500v1.500h1" fill="none" stroke={clock ? '#e0a92f' : '#9aa5a9'} strokeWidth="0.6" />
        </svg>
      </div>
      <div className={`mt-[6px] text-[6px] leading-[7px] ${master ? 'text-[#a4e24a]' : 'text-[#5f6a6f]'}`}>{master ? '◆' : '⌃'}</div>
    </div>
  );
}

function MixerSide() {
  return (
    <aside className="flex w-[84px] shrink-0 flex-col bg-[#4d595e] text-[6px] text-[#ccd5d7]">
      <div className="flex h-[10px] items-center justify-between bg-[#414b4e] pr-[3px]">
        <span className="text-[5px]">Mixer - Master</span>
        <WindowButtons />
      </div>
      <div className="flex h-[11px] items-center gap-[3px] pl-[2px]">
        <span className="h-[5px] w-[5px] rounded-full border border-[#2d363a]" />
        <select aria-label="Input" className="h-[8px] w-[59px] appearance-none bg-[#272f33] pl-px text-[5px] leading-[8px] text-[#c3cccd]"><option>(none)</option></select>
        <span className="h-[7px] w-[7px] rounded-full border border-[#a5afb2]" />
      </div>
      <ul className="grid h-[72px] auto-rows-fr bg-[#586870]">
        {SLOTS.map((s) => {
          const used = s.startsWith('Fab');
          return (
            <li key={s} className={`flex items-center border-b border-[#4f5d64] pl-[2px] text-[5px] leading-[6px] ${used ? 'bg-[#4b585e] text-[#e8eeef]' : 'text-[#86949a]'}`}>
              <span className="w-[5px] text-[4px] text-[#dde4e6]">▶</span>
              {s}
              <span className={`ml-auto h-[6px] w-[6px] rounded-full border bg-[#39444a] ${used ? 'border-[#dde4e6]' : 'border-[#75838a]'}`} />
              <span className="mx-[4px] h-[2px] w-[2px] bg-[#a2d43c]" />
            </li>
          );
        })}
      </ul>
      <div className="flex h-[35px] items-center gap-[4px] px-px">
        <svg viewBox="0 0 54 28" className="h-[28px] w-[54px] rounded-[2px] border border-[#3b464a] bg-[#505d62]">
          <path d="M13 0v28M27 0v28M40 0v28" stroke="#46535a" strokeWidth="0.8" />
          <path d="M0 13h54" stroke="#b4bec1" strokeWidth="1" />
        </svg>
        <div className="flex gap-[2px]">
          {['Low', 'Mid', 'High'].map((b) => (
            <input key={b} type="range" aria-label={b} className="h-[28px] w-[6px] appearance-none bg-[linear-gradient(90deg,transparent_2px,#38434a_2px,#38434a_4px,transparent_4px)] [direction:rtl] [writing-mode:vertical-lr] [&::-webkit-slider-thumb]:h-[8px] [&::-webkit-slider-thumb]:w-[6px] [&::-webkit-slider-thumb]:appearance-none [&::-webkit-slider-thumb]:bg-[linear-gradient(#d3d8db_0_3px,#2b3237_3px_4px,#aab0b5_4px_6px,#39444a_6px)]" />
          ))}
        </div>
      </div>
      <div className="flex h-[11px] items-center gap-[3px] border-t border-[#3f4a4e] pl-[2px]">
        <span className="h-[6px] w-[6px] rounded-full border border-[#e0a92f] bg-[#6b5a2a]" />
        <span className="text-[5px]">(none)</span>
        <span className="ml-auto mr-[5px] text-[5px]">▸</span>
      </div>
      <div className="flex h-[11px] items-center gap-[3px] pl-[2px]">
        <span className="h-[4px] w-[5px] rounded-full border border-[#2d363a]" />
        <select aria-label="Output" className="h-[8px] flex-1 appearance-none bg-[#272f33] pl-px text-[5px] leading-[8px] text-[#dbe2e3]"><option>Out 1 - Out 2</option></select>
        <span className="mr-px text-[5px]">▸</span>
      </div>
    </aside>
  );
}

function Mixer() {
  return (
    <div className="absolute right-0 bottom-0 flex h-[150px] w-[71.8%] overflow-hidden bg-[#3a4448]">
      <div className="flex min-w-0 flex-1 flex-col">
        <div className="flex h-[10px] shrink-0 items-center gap-[3px] bg-[#3f494c] pl-[2px] text-[6px] text-[#ccd5d7]">
          <span className="text-[5px]">▸</span>
          <Scissors className="h-[6px] w-[6px]" strokeWidth={4} />
          <Download className="h-[6px] w-[6px]" strokeWidth={3} />
          <Cable className="h-[6px] w-[6px] text-[#6fb4e0]" strokeWidth={4} />
          <span className="h-[5px] w-[5px] border border-[#e0a92f] border-r-2" />
          <span className="text-[5px]">Wide 3</span>
          <span className="ml-[10px] text-[5px] text-[#8b9597]">›</span>
        </div>
        <div className="flex h-[7px] shrink-0 items-center bg-[#626c6f] text-center text-[5px] leading-[7px] text-[#333d40]">
          <span className="w-[18px]">Current</span>
          <span className="w-[18px] bg-[#6f7a7d] text-white">Master</span>
          <span className="w-[3px] self-stretch bg-[#262e32]" />
          {INSERTS.map((_, i) => <span key={i} className="min-w-0 flex-1">{i + 1}</span>)}
          <span className="w-[7px]" />
        </div>
        <div className="flex min-h-0 flex-1">
          <div className="flex w-[18px] flex-col items-center bg-[#303a3f]">
            <div className="mt-[2px] h-[15px] w-[9px] shrink-0 border-b border-[#c9a070] bg-[#242c30]" />
            <div className="flex h-[72px] shrink-0 gap-px">
              <span className="w-[4px] bg-linear-to-b from-[#f08a4a] via-[#b8dc3c] via-20% to-[#7fd62e]" />
              <span className="w-[4px] bg-linear-to-b from-[#f0924a] via-[#b8dc3c] via-20% to-[#7fd62e]" />
            </div>
            <div className="mt-[3px]"><Bulb /></div>
            <span className="mt-[4px] h-[2px] w-[2px] bg-[#ccd4d6]" />
          </div>
          <div className="flex w-[18px]"><Strip name="Master" pos={7} level={24} lit clock master /></div>
          <div className="w-[3px] bg-[#1e2629]" />
          {INSERTS.map(([name, pos, level, lit], i) => (
            <Strip key={i} name={name} pos={pos} level={level} lit={lit === 1} hot={level > 16} clock={[22, 24, 25].includes(i + 1)} />
          ))}
          <div className="w-[7px] bg-[#262e32]" />
        </div>
      </div>
      <MixerSide />
      <div className="w-[3px] bg-[#414b4e]" />
    </div>
  );
}

export default function App() {
  return (
    <div className="flex min-h-screen items-center bg-black font-['Liberation_Sans_Narrow','Roboto_Condensed','Open_Sans_Condensed','Liberation_Sans',sans-serif]">
      <div className="w-full overflow-hidden bg-[#414b4d]">
        <Toolbar />
        <PlaylistHeader />
        <div className="relative flex h-[494px] border-b-2 border-[#616b6d] pl-[6px]">
          <Picker />
          <div className="flex w-[6px] shrink-0 flex-col bg-[#353e41] pt-[15px]">
            <div className="h-[22px] border border-[#2c3437] bg-[#515b5e]" />
          </div>
          <TrackHeads />
          <Playlist />
          <div className="w-[8px] shrink-0 bg-[#3a4447] pt-[15px]">
            <div className="h-[21px] bg-[#626c6e]" />
          </div>
          <div className="w-[2px] shrink-0 bg-[#4d575a]" />
          <Mixer />
        </div>
      </div>
    </div>
  );
}
